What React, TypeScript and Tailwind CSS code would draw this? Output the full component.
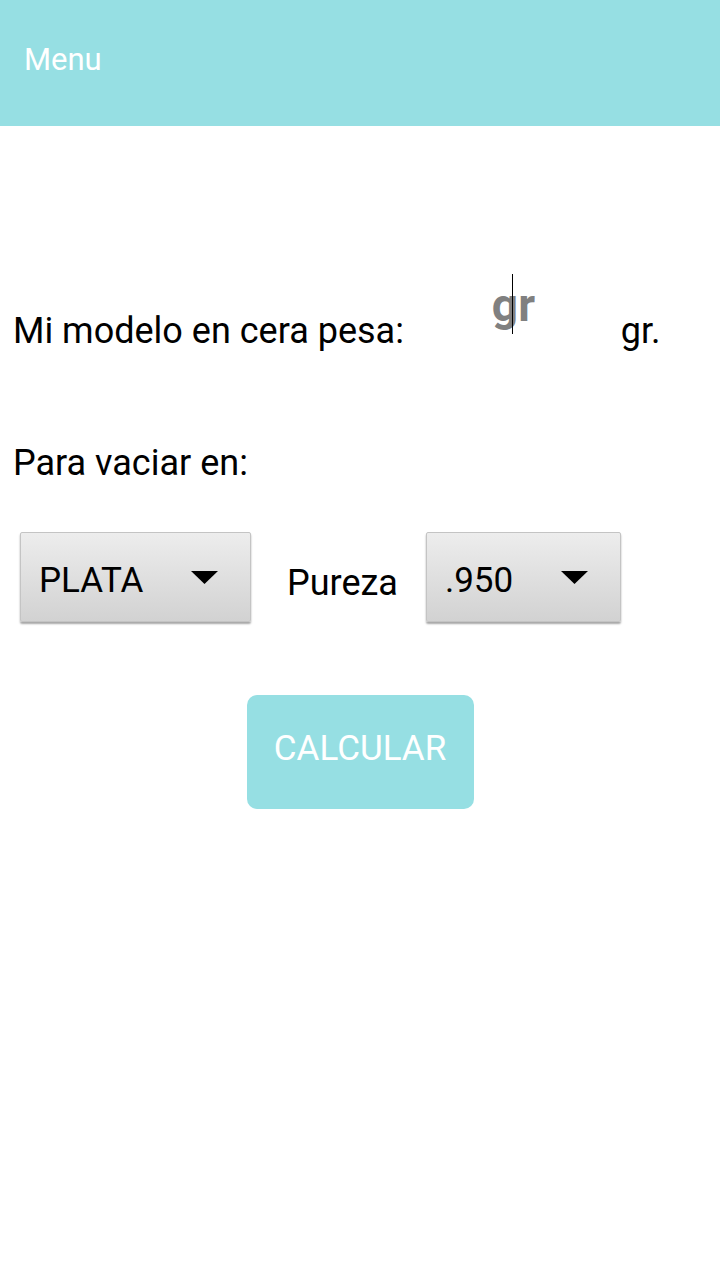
import React from "react";

function Arrow() {
  return (
    <svg width="27" height="13" viewBox="0 0 27 13">
      <polygon points="0,0 27,0 13.5,13" fill="#000" />
    </svg>
  );
}

function Spinner({ label, width }: { label: string; width: string }) {
  return (
    <div
      className={`${width} h-[90px] flex items-center justify-between pl-[18px] pr-[32px] rounded-[2px] border border-[#c4c4c4] bg-gradient-to-b from-[#ededed] to-[#d2d2d2] shadow-[0_2px_2px_rgba(0,0,0,0.35)]`}
    >
      <span className="text-[35px] text-black leading-none mt-[6px]">{label}</span>
      <Arrow />
    </div>
  );
}

export default function App() {
  return (
    <div
      className="w-[720px] h-[1280px] bg-white flex flex-col"
      style={{ fontFamily: "Roboto, 'Noto Sans', sans-serif" }}
    >
      <div className="h-[126px] bg-[#96dfe3] flex items-center pl-[24px] shrink-0">
        <span className="text-white text-[31px] leading-none -mt-[8px]">Menu</span>
      </div>

      <div className="flex items-center mt-[148px] h-[110px]">
        <span className="ml-[13px] text-[36px] text-black leading-none mt-[4px]">
          Mi modelo en cera pesa:
        </span>
        <div className="relative ml-[88px] w-[44px] h-[60px] flex items-start">
          <span className="text-[46px] font-bold text-[#808080] leading-none -mt-[17px]">gr</span>
          <span className="absolute left-[20px] -top-[25px] w-[1px] h-[60px] bg-black"></span>
        </div>
        <span className="ml-[85px] text-[36px] text-black leading-none mt-[4px]">gr.</span>
      </div>

      <div className="ml-[13px] mt-[61px] text-[36px] text-black leading-none">
        Para vaciar en:
      </div>

      <div className="flex items-center mt-[51px] pl-[20px]">
        <Spinner label="PLATA" width="w-[231px]" />
        <span className="ml-[36px] text-[36px] text-black leading-none mt-[12px]">Pureza</span>
        <div className="ml-[28px]">
          <Spinner label=".950" width="w-[195px]" />
        </div>
      </div>

      <div className="flex justify-center mt-[73px]">
        <button className="w-[227px] h-[114px] pb-[8px] rounded-[10px] bg-[#96dfe3] text-white text-[35px] leading-none">
          CALCULAR
        </button>
      </div>
    </div>
  );
}
